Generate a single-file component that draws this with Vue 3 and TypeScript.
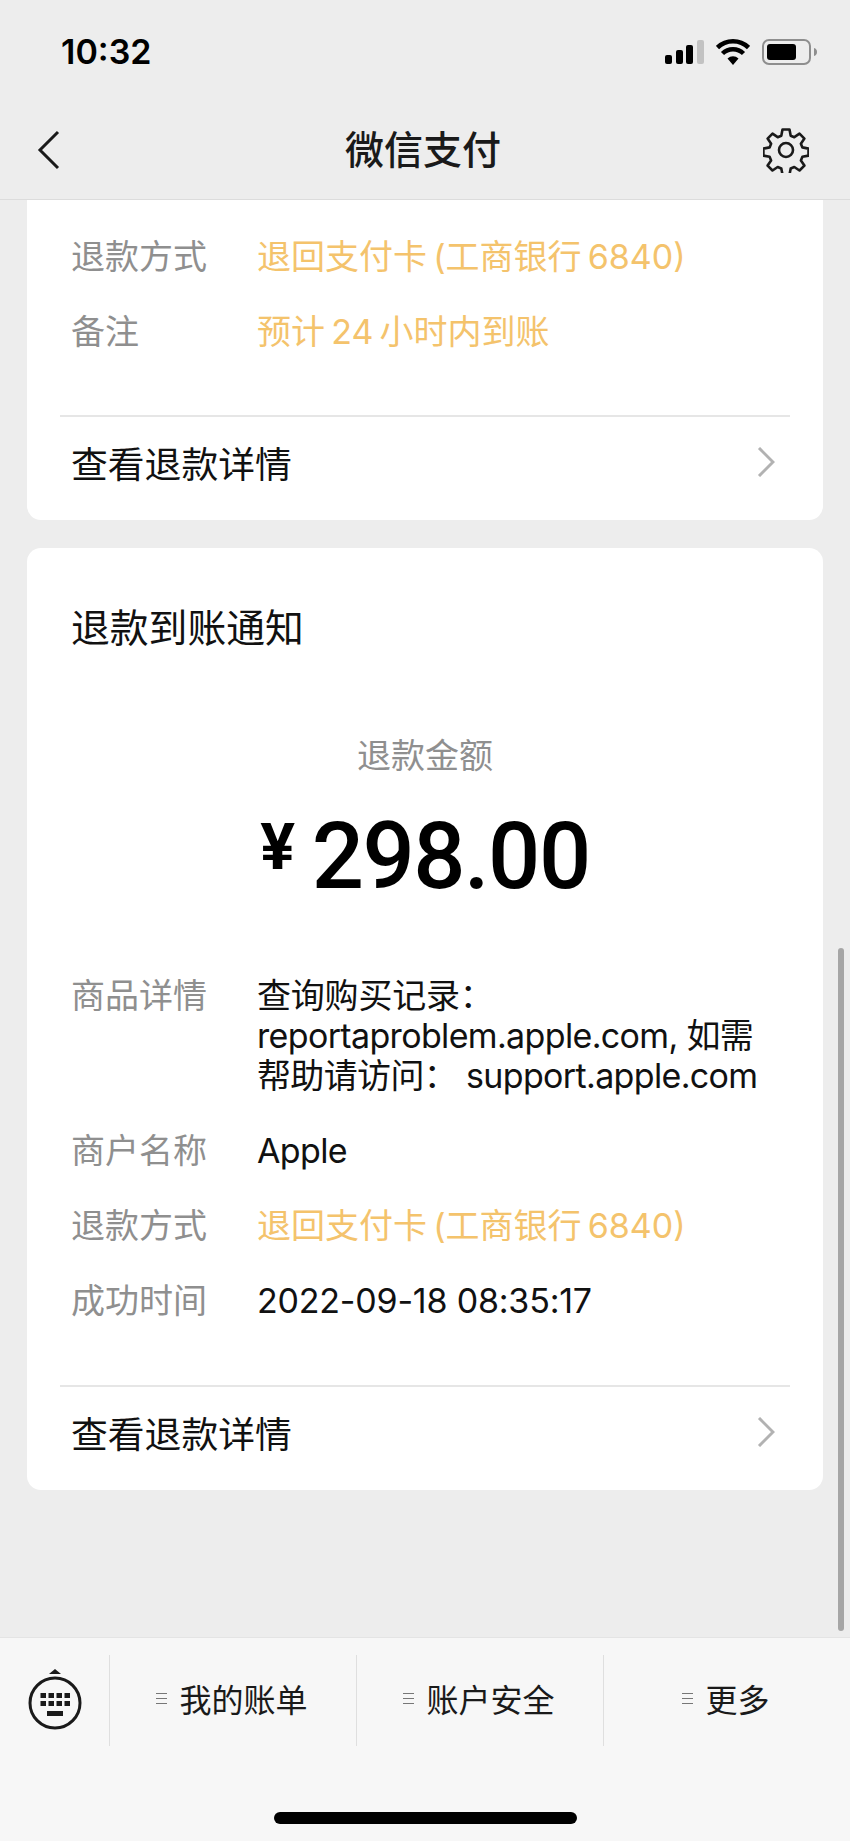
<script setup lang="ts">
interface Row {
  label: string
  lines: string[]
  accent?: boolean
}

const refundRows: Row[] = [
  { label: '退款方式', lines: ['退回支付卡\u2009(工商银行\u20096840)'], accent: true },
  { label: '备注', lines: ['预计\u200924\u2009小时内到账'], accent: true },
]

const detailRows: Row[] = [
  { label: '商品详情', lines: ['查询购买记录：', 'reportaproblem.apple.com, 如需', '帮助请访问： support.apple.com'] },
  { label: '商户名称', lines: ['Apple'] },
  { label: '退款方式', lines: ['退回支付卡\u2009(工商银行\u20096840)'], accent: true },
  { label: '成功时间', lines: ['2022-09-18 08:35:17'] },
]

const menus = ['我的账单', '账户安全', '更多']
const keys = [0, 1, 2, 3]

// latin words run a bit narrower than Inter's default spacing
const isLatin = (line: string) => /[a-z]/.test(line)
</script>

<template>
  <div class="page">
    <header class="top">
      <div class="status">
        <span class="time">10:32</span>
        <div class="status-icons">
          <svg width="39" height="24" viewBox="0 0 39 24">
            <rect x="0" y="15" width="7" height="9" rx="2" fill="#000" />
            <rect x="11" y="10" width="7" height="14" rx="2" fill="#000" />
            <rect x="21" y="5" width="7" height="19" rx="2" fill="#000" />
            <rect x="32" y="0" width="7" height="24" rx="2" fill="#c2c2c2" />
          </svg>
          <svg width="34" height="26" viewBox="0 0 34 26">
            <path d="M17 26l-5.500-6.500a8 8 0 0 1 11 0z" fill="#000" />
            <path d="M6.500 14.500a15 15 0 0 1 21 0" fill="none" stroke="#000" stroke-width="4.500" />
            <path d="M1.500 8.500a22.500 22.500 0 0 1 31 0" fill="none" stroke="#000" stroke-width="4.500" />
          </svg>
          <svg width="56" height="26" viewBox="0 0 56 26">
            <rect x="1" y="1" width="47" height="24" rx="6" fill="none" stroke="#8e8e8e" stroke-width="2" />
            <rect x="5" y="5" width="29" height="16" rx="3" fill="#000" />
            <path d="M52 9c2 .5 3 2 3 4s-1 3.500-3 4z" fill="#8e8e8e" />
          </svg>
        </div>
      </div>
      <nav class="nav">
        <svg class="back" width="24" height="40" viewBox="0 0 24 40">
          <path d="M21 2L3 20l18 18" fill="none" stroke="#1a1a1a" stroke-width="3" />
        </svg>
        <span class="title">微信支付</span>
        <svg class="gear" width="46" height="46" viewBox="0 0 46 46">
          <path
            d="M19.500 2.500h7l1.200 6.200 3.600 1.500 5.200-3.500 4.900 4.900-3.500 5.200 1.500 3.600 6.100 1.200v7l-6.100 1.200-1.500 3.600 3.500 5.200-4.900 4.900-5.200-3.500-3.600 1.500-1.200 6.100h-7l-1.200-6.100-3.600-1.500-5.200 3.500-4.900-4.900 3.500-5.200-1.500-3.600-6.200-1.200v-7l6.200-1.200 1.500-3.600-3.500-5.200 4.900-4.900 5.200 3.500 3.600-1.500z"
            fill="none"
            stroke="#1a1a1a"
            stroke-width="2.600"
            stroke-linejoin="round"
          />
          <circle cx="23" cy="23" r="7" fill="none" stroke="#1a1a1a" stroke-width="2.600" />
        </svg>
      </nav>
    </header>

    <main class="scroll">
      <section class="card first">
        <div class="rows">
          <div v-for="row in refundRows" :key="row.label" class="row">
            <span class="label">{{ row.label }}</span>
            <div class="value" :class="{ accent: row.accent }">
              <div v-for="line in row.lines" :key="line" :class="{ tight: isLatin(line) }">{{ line }}</div>
            </div>
          </div>
        </div>
        <div class="link">
          <span>查看退款详情</span>
          <svg width="18" height="30" viewBox="0 0 18 30">
            <path d="M2 1l14 14L2 29" fill="none" stroke="#b2b2b2" stroke-width="3" />
          </svg>
        </div>
      </section>

      <section class="card second">
        <h2 class="card-title">退款到账通知</h2>
        <div class="amount-label">退款金额</div>
        <div class="amount"><span class="yen">¥</span><span>298.00</span></div>
        <div class="rows">
          <div v-for="row in detailRows" :key="row.label" class="row">
            <span class="label">{{ row.label }}</span>
            <div class="value" :class="{ accent: row.accent }">
              <div v-for="line in row.lines" :key="line" :class="{ tight: isLatin(line) }">{{ line }}</div>
            </div>
          </div>
        </div>
        <div class="link">
          <span>查看退款详情</span>
          <svg width="18" height="30" viewBox="0 0 18 30">
            <path d="M2 1l14 14L2 29" fill="none" stroke="#b2b2b2" stroke-width="3" />
          </svg>
        </div>
      </section>
      <div class="scrollbar"></div>
    </main>

    <footer class="bottom">
      <div class="menu">
        <div class="keyboard">
          <svg width="54" height="64" viewBox="0 0 54 64">
            <path d="M27 0l6 5H21z" fill="#1a1a1a" />
            <circle cx="27" cy="34" r="25" fill="none" stroke="#1a1a1a" stroke-width="3" />
            <g v-for="k in keys" :key="k">
              <rect :x="12.500 + k * 8" y="24" width="5.500" height="5" fill="#1a1a1a" />
              <rect :x="12.500 + k * 8" y="32" width="5.500" height="5" fill="#1a1a1a" />
            </g>
            <rect x="19" y="42" width="16" height="5" fill="#1a1a1a" />
          </svg>
        </div>
        <div v-for="item in menus" :key="item" class="menu-item">
          <span class="lines"><i></i><i></i><i></i></span>
          <span>{{ item }}</span>
        </div>
      </div>
      <div class="home"></div>
    </footer>
  </div>
</template>

<style>
body {
  margin: 0;
}
</style>

<style scoped>
.page {
  position: relative;
  display: flex;
  flex-direction: column;
  width: 850px;
  height: 1841px;
  overflow: hidden;
  background: #ededed;
  color: #111;
  font-family: Inter, "Noto Sans CJK SC", sans-serif;
}

.top {
  height: 199px;
  background: #ededed;
  border-bottom: 1px solid #dcdcdc;
  flex-shrink: 0;
}

.status {
  display: flex;
  align-items: center;
  justify-content: space-between;
  height: 104px;
  padding: 0 32px 0 61px;
}

.time {
  font-size: 34px;
  font-weight: 600;
  color: #000;
  margin-bottom: 2px;
}

.status-icons {
  display: flex;
  align-items: center;
  gap: 12px;
}

.nav {
  display: grid;
  grid-template-columns: 1fr auto 1fr;
  align-items: center;
  height: 95px;
  padding: 0 41px 0 37px;
}

.gear {
  justify-self: end;
  margin-bottom: 4px;
}

.back {
  margin-bottom: 4px;
}

.title {
  font-size: 39px;
  font-weight: 500;
  color: #1a1a1a;
  padding-bottom: 9px;
}

.scroll {
  position: relative;
  flex: 1;
  min-height: 0;
  padding: 0 27px;
  overflow: hidden;
}

.card {
  background: #fff;
  border-radius: 0 0 14px 14px;
  padding: 0 33px 0 44px;
}

.first {
  padding-top: 37px;
  height: 320px;
  box-sizing: border-box;
}

.second {
  margin-top: 28px;
  height: 942px;
  box-sizing: border-box;
  border-radius: 14px;
  padding-top: 54px;
}

.rows {
  display: flex;
  flex-direction: column;
  gap: 35px;
}

.first .rows {
  height: 178px;
}

.second .rows {
  height: 409px;
  margin-top: 55px;
}

.row {
  display: flex;
  font-size: 34px;
  line-height: 40px;
}

.label {
  width: 186px;
  flex-shrink: 0;
  color: #8f8f8f;
}

.value {
  color: #111;
  letter-spacing: -0.200px;
}

.tight {
  letter-spacing: -0.650px;
}

.value.accent {
  color: #f4c36c;
  letter-spacing: 0;
}

.link {
  display: flex;
  align-items: center;
  justify-content: space-between;
  height: 89px;
  padding: 0 15px 9px 11px;
  border-top: 2px solid #e6e6e6;
  margin-left: -11px;
  font-size: 36.800px;
  color: #111;
}

.card-title {
  margin: 0;
  font-size: 38.800px;
  font-weight: 400;
  line-height: 52px;
}

.amount-label {
  margin-top: 78px;
  margin-left: -44px;
  margin-right: -33px;
  text-align: center;
  font-size: 34px;
  line-height: 48px;
  color: #8f8f8f;
}

.amount {
  display: flex;
  align-items: baseline;
  justify-content: center;
  margin-left: -44px;
  margin-right: -33px;
  margin-top: 22px;
  font-family: Roboto, sans-serif;
  font-size: 92px;
  font-weight: 500;
  line-height: 110px;
  color: #000;
  letter-spacing: -1.500px;
}

.yen {
  font-size: 65px;
  font-weight: 700;
  margin-right: 18px;
  transform: translateY(-19px);
}

.scrollbar {
  position: absolute;
  right: 6px;
  top: 748px;
  width: 6px;
  height: 683px;
  border-radius: 3px;
  background: #a6a6a6;
}

.bottom {
  height: 204px;
  flex-shrink: 0;
  background: #f7f7f7;
  border-top: 1px solid #e4e4e4;
  box-sizing: border-box;
}

.menu {
  display: flex;
  height: 91px;
  margin-top: 17px;
}

.keyboard {
  display: flex;
  align-items: center;
  justify-content: center;
  width: 109px;
  flex-shrink: 0;
}

.menu-item {
  display: flex;
  align-items: center;
  justify-content: center;
  gap: 12px;
  flex: 1;
  padding-bottom: 5px;
  padding-right: 2px;
  border-left: 1px solid #dfdfdf;
  font-size: 32px;
  color: #1a1a1a;
}

.lines {
  display: flex;
  flex-direction: column;
  gap: 4px;
}

.lines i {
  display: block;
  width: 11px;
  height: 1px;
  background: #777;
}

.home {
  width: 303px;
  height: 12px;
  margin: 66px auto 0;
  border-radius: 6px;
  background: #000;
}
</style>
